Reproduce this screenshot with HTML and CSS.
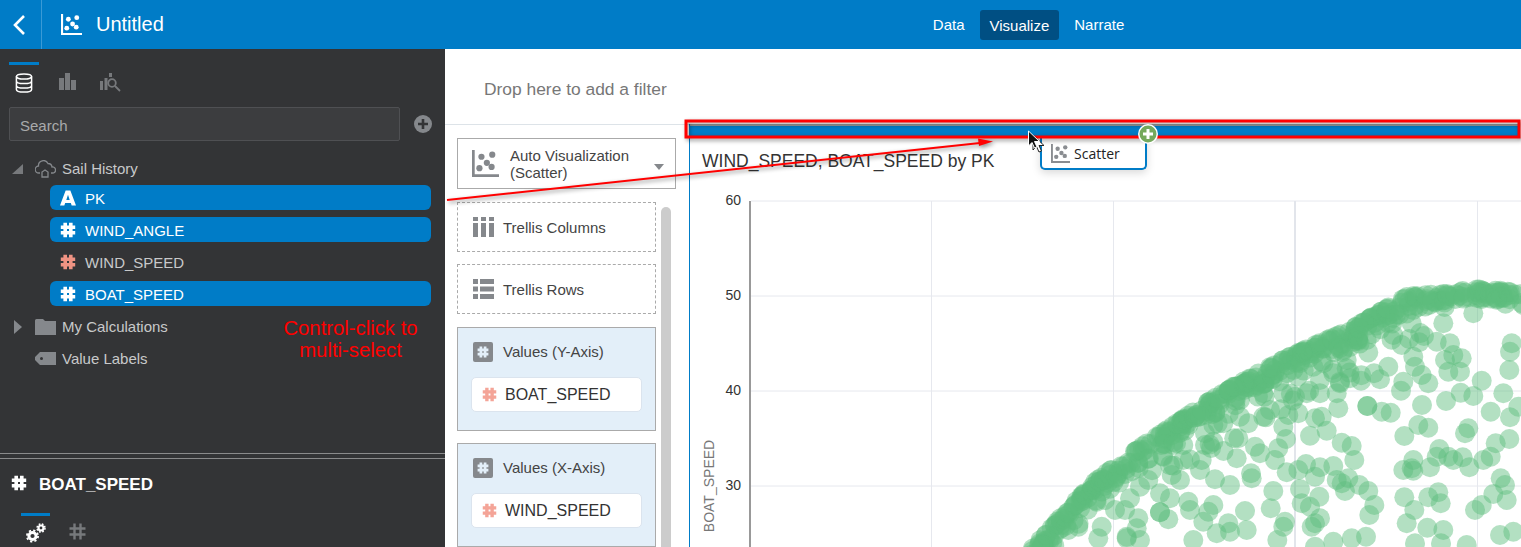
FILE: index.html
```html
<!DOCTYPE html>
<html lang="en">
<head>
  <meta charset="UTF-8" />
  <title>Untitled</title>
  <link rel="stylesheet" href="styles.css">
</head>
<body>
  <svg class="defs" width="0" height="0">
    <symbol id="hash" viewBox="0 0 16 16">
      <path d="M5.2 0.8v14.4M10.8 0.8v14.4M0.8 5.2h14.4M0.8 10.8h14.4" fill="none" stroke="currentColor" stroke-width="3.6"/>
    </symbol>
    <symbol id="scatter" viewBox="0 0 20 20">
      <path d="M1 0v19h19" fill="none" stroke="currentColor" stroke-width="2"/>
      <circle cx="7" cy="5" r="2.3" fill="currentColor"/>
      <circle cx="15" cy="3.5" r="2.3" fill="currentColor"/>
      <circle cx="11" cy="9.5" r="2.3" fill="currentColor"/>
      <circle cx="5.5" cy="13.5" r="2.3" fill="currentColor"/>
      <circle cx="14.5" cy="12.5" r="2.3" fill="currentColor"/>
    </symbol>
  </svg>

  <header class="topbar">
    <div class="back">
      <svg width="14" height="22" viewBox="0 0 14 22"><path d="M12 2L3 11l9 9" fill="none" stroke="#fff" stroke-width="2.6"/></svg>
    </div>
    <svg class="title-icon" width="21" height="21"><use href="#scatter"/></svg>
    <div class="title">Untitled</div>
    <nav class="nav">
      <span>Data</span>
      <span class="active">Visualize</span>
      <span>Narrate</span>
    </nav>
  </header>

  <div class="page">
    <aside class="sidebar">
      <div class="tabs">
        <div class="tab on">
          <svg width="18" height="20" viewBox="0 0 18 20"><g fill="none" stroke="#fff" stroke-width="1.5"><ellipse cx="9" cy="3.5" rx="7.6" ry="2.6"/><path d="M1.4 3.5v13c0 1.5 3.4 2.6 7.6 2.6s7.6-1.100 7.600-2.600v-13M1.400 8c0 1.500 3.400 2.600 7.600 2.600s7.600-1.100 7.600-2.600M1.400 12.500c0 1.500 3.400 2.600 7.600 2.600s7.600-1.100 7.600-2.600"/></g></svg>
        </div>
        <div class="tab">
          <svg width="17" height="17" viewBox="0 0 17 17" fill="#77797c"><rect x="0" y="5" width="5" height="12"/><rect x="6" y="0" width="5" height="17"/><rect x="12" y="7" width="5" height="10"/></svg>
        </div>
        <div class="tab">
          <svg width="21" height="19" viewBox="0 0 21 19"><g fill="#77797c"><rect x="0" y="8" width="3" height="9"/><rect x="4.500" y="5" width="3" height="12"/><rect x="9" y="0" width="3" height="4"/></g><circle cx="12" cy="10" r="3.800" fill="none" stroke="#77797c" stroke-width="1.800"/><path d="M15 13l5 5" stroke="#77797c" stroke-width="1.800"/></svg>
        </div>
      </div>

      <div class="search-row">
        <div class="search">Search</div>
        <svg width="18" height="18" viewBox="0 0 18 18"><circle cx="9" cy="9" r="9" fill="#85888c"/><path d="M9 4v10M4 9h10" stroke="#333436" stroke-width="2.600"/></svg>
      </div>

      <div class="tree">
        <div class="node root">
          <span class="arrow-open"></span>
          <svg class="node-icon" width="21" height="18" viewBox="0 0 21 18"><path d="M5 13H4a3.500 3.500 0 0 1-.5-7A5 5 0 0 1 13 3.500a4 4 0 0 1 4 3.500 3 3 0 0 1 1 6h-2" fill="none" stroke="#85888c" stroke-width="1.300"/><path d="M7 17v-5l3-2 3 2v5z" fill="none" stroke="#85888c" stroke-width="1.300"/></svg>
          <span>Sail History</span>
        </div>
        <div class="field selected">
          <svg class="field-icon" width="16" height="16" viewBox="0 0 17 16"><path fill-rule="evenodd" d="M6 0h5l6 16h-4.600l-.9-2.800H5.500L4.600 16H0zM8.500 4.500L6.700 10h3.600z" fill="#fff"/></svg>
          <span>PK</span>
        </div>
        <div class="field selected">
          <svg class="field-icon" width="16" height="16"><use href="#hash"/></svg>
          <span>WIND_ANGLE</span>
        </div>
        <div class="field">
          <svg class="field-icon salmon" width="16" height="16"><use href="#hash"/></svg>
          <span>WIND_SPEED</span>
        </div>
        <div class="field selected last">
          <svg class="field-icon" width="16" height="16"><use href="#hash"/></svg>
          <span>BOAT_SPEED</span>
        </div>
        <div class="node">
          <span class="arrow-closed"></span>
          <svg class="node-icon" width="21" height="16" viewBox="0 0 21 16"><path d="M0 1.500Q0 0 1.500 0H8l2 2h11v14H0z" fill="#85888c"/></svg>
          <span>My Calculations</span>
        </div>
        <div class="node">
          <span class="arrow-none"></span>
          <svg class="node-icon" width="21" height="13" viewBox="0 0 21 13"><path fill-rule="evenodd" d="M5 0h16v13H5L0 8V5zM6.500 5a1.500 1.500 0 1 0 0 3 1.500 1.500 0 0 0 0-3z" fill="#85888c"/></svg>
          <span>Value Labels</span>
        </div>
      </div>

      <div class="field-panel">
        <div class="field-title">
          <svg width="16" height="16"><use href="#hash"/></svg>
          <span>BOAT_SPEED</span>
        </div>
        <div class="field-tabs">
          <div class="field-tab on">
            <svg width="20" height="20" viewBox="0 0 20 20"><g fill="none" stroke="#fff"><circle cx="6.500" cy="13" r="3.600" stroke-width="3"/><circle cx="6.500" cy="13" r="5.600" stroke-width="1.800" stroke-dasharray="2.200 2.200"/><circle cx="15" cy="5" r="2.500" stroke-width="2.200"/><circle cx="15" cy="5" r="4" stroke-width="1.500" stroke-dasharray="1.700 1.500"/></g></svg>
          </div>
          <div class="field-tab">
            <svg width="17" height="17" viewBox="0 0 17 17"><path d="M5.500 0.500v16M11.500 0.500v16M0.500 5.500h16M0.500 11.500h16" stroke="#77797c" stroke-width="2.400" fill="none"/></svg>
          </div>
        </div>
      </div>
    </aside>

    <main class="main">
      <div class="filterbar">Drop here to add a filter</div>
      <div class="work">
        <div class="grammar">
          <div class="viz-select">
            <svg class="viz-icon" width="27" height="27"><use href="#scatter"/></svg>
            <div class="viz-name">Auto Visualization<br>(Scatter)</div>
            <span class="viz-caret"></span>
          </div>
          <div class="drops">
            <div class="drop-list">
              <div class="dropzone">
                <svg width="21" height="20" viewBox="0 0 21 20" fill="#85888c"><rect x="0" y="0" width="5" height="4"/><rect x="0" y="6" width="5" height="14"/><rect x="8" y="0" width="5" height="4"/><rect x="8" y="6" width="5" height="14"/><rect x="16" y="0" width="5" height="4"/><rect x="16" y="6" width="5" height="14"/></svg>
                <span>Trellis Columns</span>
              </div>
              <div class="dropzone trellis-last">
                <svg width="21" height="20" viewBox="0 0 21 20" fill="#85888c"><rect x="0" y="0" width="5" height="5"/><rect x="7" y="0" width="14" height="5"/><rect x="0" y="7.500" width="5" height="5"/><rect x="7" y="7.500" width="14" height="5"/><rect x="0" y="15" width="5" height="5"/><rect x="7" y="15" width="14" height="5"/></svg>
                <span>Trellis Rows</span>
              </div>
              <div class="values">
                <div class="values-head">
                  <span class="hash-box"><svg width="12" height="12"><use href="#hash"/></svg></span>
                  <span class="values-label">Values (Y-Axis)</span>
                </div>
                <div class="pill">
                  <svg width="15" height="15"><use href="#hash"/></svg>
                  <span>BOAT_SPEED</span>
                </div>
              </div>
              <div class="values">
                <div class="values-head">
                  <span class="hash-box"><svg width="12" height="12"><use href="#hash"/></svg></span>
                  <span class="values-label">Values (X-Axis)</span>
                </div>
                <div class="pill">
                  <svg width="15" height="15"><use href="#hash"/></svg>
                  <span>WIND_SPEED</span>
                </div>
              </div>
            </div>
            <div class="scrollbar"></div>
          </div>
        </div>

        <section class="canvas">
          <div class="dropbar"></div>
          <h2 class="chart-title">WIND_SPEED, BOAT_SPEED by PK</h2>
          <svg class="plot" id="plot" width="832" height="357" viewBox="689 190 832 357">
            <g class="grid">
              <path d="M751 201H1521M751 296H1521M751 391H1521M751 486H1521M931.500 201V547M1113.500 201V547M1477.500 201V547"/>
              <path class="grid-mid" d="M1295 201V547"/>
            </g>
            <path class="axis" d="M750 201V547"/>
            <g class="ticks">
              <text x="741" y="205">60</text>
              <text x="741" y="300">50</text>
              <text x="741" y="395">40</text>
              <text x="741" y="490">30</text>
            </g>
            <text class="axis-name" transform="translate(714 486) rotate(-90)">BOAT_SPEED</text>
            <g id="dots" class="dots"></g>
          </svg>
        </section>
      </div>
    </main>
  </div>

  <!-- annotations drawn on top of the screenshot -->
  <div class="note">Control-click to<br>multi-select</div>
  <div class="drag-chip">
    <svg width="19" height="19"><use href="#scatter"/></svg>
    <span>Scatter</span>
  </div>
  <svg class="markup" width="1521" height="547">
    <g class="red-shadow">
      <rect x="686" y="121" width="833" height="16" fill="none" stroke="#f00" stroke-width="3"/>
      <path d="M447 200L980 143" stroke="#f00" stroke-width="2" fill="none"/>
      <path d="M993 141.500L978 138.500L979 146z" fill="#f00"/>
    </g>
    <circle cx="1148" cy="134" r="10" fill="#fff"/>
    <circle cx="1148" cy="134" r="8.500" fill="#75a95c"/>
    <path d="M1148 129v10M1143 134h10" stroke="#fff" stroke-width="3"/>
    <path d="M1033 135l0 15 3.500-3.500 2.500 5.500 2.500-1-2.500-5.500 5 0z" fill="#fff" stroke="#222" stroke-width="1"/>
    <path d="M1028.500 131v15l3.500-3.500 2.500 5.500 2.500-1-2.500-5.500 5 0z" fill="#111" stroke="#fff" stroke-width="1"/>
  </svg>

  <script src="script.js"></script>
</body>
</html>
```

FILE: styles.css
```css
*
{
  box-sizing: border-box;
}
body
{
  font-family: "Liberation Sans", Arial, sans-serif;
  margin: 0;
  width: 1521px;
  height: 547px;
  overflow: hidden;
  position: relative;
  background: #fff;
}
.defs
{
  position: absolute;
}
.topbar
{
  height: 49px;
  background: #007cc7;
  color: #fff;
  display: flex;
  align-items: center;
}
.back
{
  width: 42px;
  height: 49px;
  padding-left: 12px;
  border-right: 1px solid #3a9ad6;
  display: flex;
  align-items: center;
}
.title-icon
{
  margin-left: 19px;
  color: #fff;
}
.title
{
  font-size: 20px;
  margin-left: 14px;
}
.nav
{
  display: flex;
  align-items: center;
  gap: 15px;
  margin-left: 769px;
  font-size: 15px;
}
.nav span
{
  padding: 7px 0;
}
.nav .active
{
  background: #004f83;
  border-radius: 3px;
  padding: 7px 10px;
  height: 30px;
}
.page
{
  display: flex;
  height: 498px;
}
.sidebar
{
  width: 445px;
  background: #333436;
  color: #c8c9ca;
  display: flex;
  flex-direction: column;
  font-size: 15px;
}
.tabs
{
  display: flex;
  height: 58px;
  padding: 13px 0 0 9px;
}
.tab
{
  width: 30px;
  margin-right: 13px;
  padding-top: 8px;
  display: flex;
  justify-content: center;
  border-top: 3px solid transparent;
}
.tab.on
{
  border-top-color: #007cc7;
}
.search-row
{
  display: flex;
  align-items: center;
  padding-left: 9px;
  gap: 14px;
}
.search
{
  width: 391px;
  height: 34px;
  line-height: 36px;
  padding-left: 10px;
  background: #3c3d3f;
  border: 1px solid #4f5053;
  border-radius: 2px;
  color: #a9aaab;
}
.tree
{
  margin-top: 15px;
}
.node
{
  height: 25px;
  margin-bottom: 7px;
  display: flex;
  align-items: center;
}
.node.root
{
  margin-bottom: 4px;
}
.node span:last-child
{
  margin-left: 6px;
}
.node-icon
{
  margin-left: 12px;
}
.arrow-open
{
  width: 0;
  height: 0;
  margin-left: 12px;
  border-style: solid;
  border-width: 0 0 10px 11px;
  border-color: transparent transparent #77797c transparent;
}
.arrow-closed
{
  width: 0;
  height: 0;
  margin-left: 14px;
  margin-right: 1px;
  border-style: solid;
  border-width: 7px 0 7px 8px;
  border-color: transparent transparent transparent #85888c;
}
.arrow-none
{
  width: 23px;
}
.field
{
  height: 25px;
  width: 381px;
  margin-left: 50px;
  margin-bottom: 7px;
  padding-left: 10px;
  border-radius: 6px;
  display: flex;
  align-items: center;
  gap: 9px;
}
.field span
{
  padding-top: 1px;
}
.field.last
{
  margin-bottom: 8px;
}
.field.selected
{
  background: #007cc7;
  color: #fff;
}
.field-icon
{
  color: #fff;
  flex: none;
}
.field-icon.salmon
{
  color: #ef9383;
}
.field-panel
{
  margin-top: auto;
  height: 94px;
  border-top: 1px solid #8a8b8c;
  padding-top: 4px;
}
.field-title
{
  border-top: 1px solid #8a8b8c;
  height: 55px;
  padding: 16px 0 0 11px;
  display: flex;
  align-items: flex-start;
  gap: 12px;
  color: #fff;
  font-size: 17px;
  font-weight: bold;
}
.field-tabs
{
  display: flex;
  padding-left: 21px;
  gap: 13px;
}
.field-tab
{
  width: 29px;
  padding-top: 7px;
  border-top: 3px solid transparent;
  display: flex;
  justify-content: center;
}
.field-tab.on
{
  border-top-color: #007cc7;
}
.main
{
  flex: 1;
  display: flex;
  flex-direction: column;
  min-width: 0;
}
.filterbar
{
  height: 75px;
  padding: 30px 0 0 39px;
  font-size: 17.4px;
  color: #777;
}
.work
{
  flex: 1;
  display: flex;
  min-height: 0;
}
.grammar
{
  width: 244px;
  border-top: 1px solid #dde3e8;
  padding: 13px 0 0 12px;
  flex: none;
}
.viz-select
{
  width: 219px;
  height: 51px;
  border: 1px solid #aaa;
  display: flex;
  align-items: center;
  position: relative;
  color: #444;
  font-size: 15px;
  line-height: 17px;
}
.viz-icon
{
  margin-left: 14px;
  color: #85888c;
  flex: none;
}
.viz-name
{
  margin-left: 11px;
}
.viz-caret
{
  width: 0;
  height: 0;
  margin-left: auto;
  margin-right: 11px;
  margin-top: 6px;
  border-style: solid;
  border-width: 6px 5px 0 5px;
  border-color: #85888c transparent transparent transparent;
}
.drops
{
  display: flex;
  margin-top: 13px;
  gap: 5px;
}
.drop-list
{
  width: 199px;
  display: flex;
  flex-direction: column;
  gap: 12px;
}
.dropzone
{
  height: 50px;
  border: 1px dashed #aaa;
  display: flex;
  align-items: center;
  gap: 9px;
  padding-left: 15px;
  font-size: 15px;
  color: #444;
}
.trellis-last
{
  margin-bottom: 1px;
}
.values
{
  height: 104px;
  flex: none;
  background: #e3eff9;
  border: 1px solid #aaa;
  padding: 13px 0 0 13px;
  font-size: 15px;
  color: #444;
}
.values-head
{
  display: flex;
  align-items: center;
  gap: 10px;
  margin-left: 2px;
}
.values-label
{
  line-height: 20px;
  padding-top: 1px;
}
.hash-box
{
  width: 20px;
  height: 20px;
  background: #85888c;
  border-radius: 2px;
  color: #e3eff9;
  display: flex;
  align-items: center;
  justify-content: center;
}
.pill
{
  width: 171px;
  height: 35px;
  margin-top: 15px;
  background: #fff;
  border: 1px solid #dbe4ee;
  border-radius: 5px;
  display: flex;
  align-items: center;
  gap: 8px;
  padding-left: 10px;
  font-size: 16px;
  color: #333;
}
.pill svg
{
  color: #f4a497;
}
.scrollbar
{
  width: 10px;
  height: 360px;
  margin-top: 5px;
  background: #ccc;
  border-radius: 5px 5px 0 0;
}
.canvas
{
  flex: 1;
  min-width: 0;
  border-left: 1px solid #007cc7;
}
.dropbar
{
  height: 13px;
  width: 830px;
  background: #007cc7;
  border-top: 2px solid #999;
}
.chart-title
{
  margin: 14px 0 0 12px;
  font-size: 17.5px;
  font-weight: normal;
  line-height: 20px;
  color: #333;
}
.plot
{
  display: block;
  margin-top: 19px;
  margin-left: -1px;
}
.grid path
{
  fill: none;
  stroke: #e6e8ee;
  stroke-width: 1;
}
.grid .grid-mid
{
  stroke: #e2e5eb;
  stroke-width: 2;
}
.axis
{
  stroke: #999;
  stroke-width: 2;
}
.ticks text
{
  font-size: 14px;
  fill: #333;
  text-anchor: end;
}
.axis-name
{
  font-size: 14px;
  fill: #777;
  text-anchor: middle;
}
.dots circle
{
  fill: #5ebd7e;
  fill-opacity: 0.47;
}
.note
{
  position: absolute;
  left: 270px;
  top: 317px;
  width: 161px;
  text-align: center;
  color: #f00;
  font-size: 20.3px;
  line-height: 22px;
}
.drag-chip
{
  position: absolute;
  left: 1040px;
  top: 136px;
  width: 107px;
  height: 34px;
  background: #fff;
  border: 2px solid #007cc7;
  border-top: none;
  border-radius: 0 0 5px 5px;
  box-shadow: 0 3px 8px rgba(0,0,0,0.15);
  display: flex;
  align-items: center;
  gap: 4px;
  padding: 3px 0 0 9px;
  font-family: "Open Sans", sans-serif;
  font-size: 14px;
  color: #222;
}
.drag-chip svg
{
  color: #8a8d91;
}
.markup
{
  position: absolute;
  left: 0;
  top: 0;
  pointer-events: none;
}
.red-shadow
{
  filter: drop-shadow(2px 2px 2px rgba(0,0,0,0.45));
}
```

FILE: script.js
```js
// scatter dots, positions read off the picture at 3x from (1000,260)
const loose = [
  1420,160, 1272,228, 1205,255, 1180,225, 1235,190, 1240,290, 1245,320, 1265,345, 1285,370, 1310,245,
  1350,250, 1335,300, 1345,335, 1380,335, 1385,295, 1360,285, 1535,250, 1530,275, 1528,330, 1122,340,
  1165,320, 1140,358, 1083,362, 1050,355, 1040,325, 1203,392, 1210,365, 1445,362, 1382,398, 1420,408,
  1510,400, 1338,423, 1266,435, 1472,455, 1530,472, 1555,440, 1102,438, 1102,438, 1145,455, 1172,458,
  1015,445, 965,470, 945,475, 895,460, 865,465, 930,527, 980,512, 1025,548, 1055,558, 1063,600,
  1255,495, 1285,503, 1213,528, 1395,520, 1405,505, 1487,550, 1528,537, 1318,567, 1240,600, 1235,625,
  1210,630, 1240,632, 1290,622, 1310,590, 1345,590, 1360,600, 1388,592, 1408,622, 1450,600, 1472,590,
  1502,655, 1515,675, 1480,702, 1520,720, 1445,735, 1425,750, 1315,697, 1285,712, 1322,730, 1213,712,
  1243,750, 1220,790, 1282,803, 1330,810, 1500,825, 1540,815, 1400,855, 1245,850, 1323,850, 1098,830,
  1055,835, 1000,845, 945,860, 855,785, 850,800, 832,840, 740,810, 735,753, 812,745, 820,693,
  900,687, 905,730, 930,740, 958,710, 960,775, 945,790, 935,800, 860,637, 895,630, 918,612,
  945,650, 960,622, 1000,618, 1010,660, 1045,655, 1035,693, 1025,670, 1078,675, 1105,693, 1123,735,
  1108,765, 825,600, 835,565, 858,537, 753,640, 755,655, 690,675, 645,658, 710,595, 600,630,
  605,600, 550,600, 515,645, 540,660, 565,725, 570,750, 480,757, 480,757, 505,778, 640,735,
  625,755, 610,785, 650,820, 685,790, 690,815, 580,840, 415,775, 410,805, 420,840, 380,830,
  380,835, 375,750, 345,750, 295,835, 305,800, 315,720, 235,800, 205,810, 390,715, 420,680,
  445,660, 480,700, 510,715, 615,555, 640,495, 670,490, 715,535, 765,560, 780,580, 615,520,
  640,545, 720,470, 745,490, 790,470, 810,450, 850,500, 850,400, 885,410, 920,400, 960,400,
  1010,400, 940,320, 970,310, 1040,300, 1020,370, 960,360, 880,330, 790,400, 720,420, 700,380,
  520,555, 550,555, 490,590, 860,340, 900,310, 1000,340, 1030,270, 1100,240, 1330,190, 1240,150
];

// centres of the dots on the outer edge of the arc
const edge = [
  [90,870], [180,775], [280,670], [410,570], [560,470], [640,415], [800,325],
  [900,275], [1050,210], [1220,110], [1335,100], [1450,85], [1560,100]
];

const dots = document.getElementById('dots');
let seed = 7;

function rnd()
{
  seed = (seed * 16807) % 2147483647;
  return seed / 2147483647;
}

function addDot(x, y)
{
  const c = document.createElementNS('http://www.w3.org/2000/svg', 'circle');
  c.setAttribute('cx', (1000 + x / 3).toFixed(1));
  c.setAttribute('cy', (260 + y / 3).toFixed(1));
  c.setAttribute('r', 10);
  dots.appendChild(c);
}

for (let i = 0; i < edge.length - 1; i++)
{
  const a = edge[i];
  const b = edge[i + 1];
  const len = Math.hypot(b[0] - a[0], b[1] - a[1]);
  const count = Math.round(len / 4.5);
  for (let n = 0; n < count; n++)
  {
    const t = rnd();
    const depth = rnd() * rnd() * 50;
    addDot(a[0] + (b[0] - a[0]) * t + depth * 0.5, a[1] + (b[1] - a[1]) * t + depth);
  }
  // the thick part of the arc, left of the middle
  if (i >= 3 && i <= 8)
  {
    for (let n = 0; n < count / 6; n++)
    {
      const t = rnd();
      const depth = 30 + rnd() * 110;
      addDot(a[0] + (b[0] - a[0]) * t + depth * 0.5, a[1] + (b[1] - a[1]) * t + depth);
    }
  }
}

for (let i = 0; i < loose.length; i += 2)
{
  addDot(loose[i], loose[i + 1]);
}
```
